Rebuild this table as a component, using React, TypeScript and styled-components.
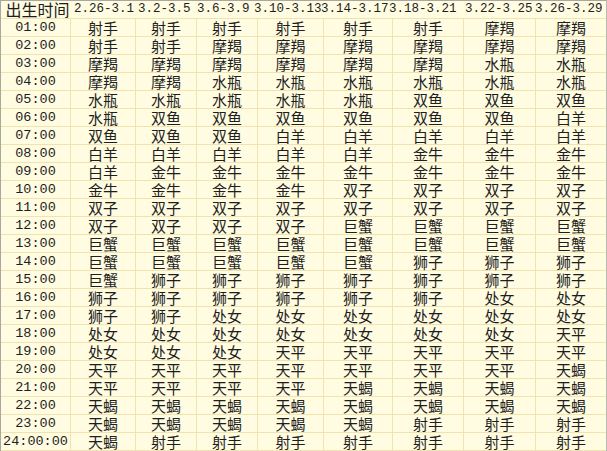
import { createGlobalStyle, styled } from "styled-components";

const GlobalStyle = createGlobalStyle`
    html, body {
        margin: 0;
        padding: 0;
        background: #ffffff;
    }
`;

// body columns follow the centred signs, header texts start a bit off those lines
const BODY_COLUMNS = [70, 65, 61, 61, 66, 69, 71, 72, 70];
const HEAD_COLUMNS = [73, 64, 59, 57, 67, 68, 76, 70, 71];

const toTemplate = (cols: number[]) => cols.map((w) => `${w}px`).join(" ");

const Sheet = styled.div`
    display: flex;
    flex-direction: column;
    width: 605px;
    border-top: 1px solid #a8a8a0;
    border-left: 1px solid #a8a8a0;
    border-right: 1px solid #b8b8b0;
    background: #fffce1;
    color: #1e1e1e;
`;

const HeadRow = styled.div`
    display: grid;
    grid-template-columns: ${toTemplate(HEAD_COLUMNS)};
    box-sizing: border-box;
    height: 18px;
    border-bottom: 1px solid #f0e3ae;
`;

const Body = styled.div`
    display: grid;
    grid-template-columns: ${toTemplate(BODY_COLUMNS)};
    grid-auto-rows: 18px;
`;

const HeadTitle = styled.div`
    display: flex;
    align-items: center;
    justify-content: center;
    font-family: "Noto Sans CJK SC", sans-serif;
    font-size: 16px;
    line-height: 17px;
    white-space: nowrap;
`;

const HeadRange = styled.div`
    display: flex;
    align-items: center;
    font-family: "Liberation Mono", "DejaVu Sans Mono", monospace;
    font-size: 12.5px;
    line-height: 17px;
    white-space: nowrap;
`;

const Cell = styled.div<{ $time?: boolean }>`
    display: flex;
    align-items: center;
    justify-content: center;
    box-sizing: border-box;
    border-right: 1px solid #f0e3ae;
    border-bottom: 1px solid #f0e3ae;
    white-space: nowrap;
    font-family: ${(p) =>
        p.$time
            ? `"Liberation Mono", "DejaVu Sans Mono", monospace`
            : `"Noto Sans CJK SC", sans-serif`};
    font-size: ${(p) => (p.$time ? "13.5px" : "15px")};
    line-height: 17px;
    &:nth-child(9n) {
        border-right: none;
    }
`;

const ranges = ["2.26-3.1", "3.2-3.5", "3.6-3.9", "3.10-3.13", "3.14-3.17", "3.18-3.21", "3.22-3.25", "3.26-3.29"];

const rows: [string, string][] = [
    ["01:00", "射手 射手 射手 射手 射手 射手 摩羯 摩羯"],
    ["02:00", "射手 射手 摩羯 摩羯 摩羯 摩羯 摩羯 摩羯"],
    ["03:00", "摩羯 摩羯 摩羯 摩羯 摩羯 摩羯 水瓶 水瓶"],
    ["04:00", "摩羯 摩羯 水瓶 水瓶 水瓶 水瓶 水瓶 水瓶"],
    ["05:00", "水瓶 水瓶 水瓶 水瓶 水瓶 双鱼 双鱼 双鱼"],
    ["06:00", "水瓶 双鱼 双鱼 双鱼 双鱼 双鱼 双鱼 白羊"],
    ["07:00", "双鱼 双鱼 双鱼 白羊 白羊 白羊 白羊 白羊"],
    ["08:00", "白羊 白羊 白羊 白羊 白羊 金牛 金牛 金牛"],
    ["09:00", "白羊 金牛 金牛 金牛 金牛 金牛 金牛 金牛"],
    ["10:00", "金牛 金牛 金牛 金牛 双子 双子 双子 双子"],
    ["11:00", "双子 双子 双子 双子 双子 双子 双子 双子"],
    ["12:00", "双子 双子 双子 双子 巨蟹 巨蟹 巨蟹 巨蟹"],
    ["13:00", "巨蟹 巨蟹 巨蟹 巨蟹 巨蟹 巨蟹 巨蟹 巨蟹"],
    ["14:00", "巨蟹 巨蟹 巨蟹 巨蟹 巨蟹 狮子 狮子 狮子"],
    ["15:00", "巨蟹 狮子 狮子 狮子 狮子 狮子 狮子 狮子"],
    ["16:00", "狮子 狮子 狮子 狮子 狮子 狮子 处女 处女"],
    ["17:00", "狮子 狮子 处女 处女 处女 处女 处女 处女"],
    ["18:00", "处女 处女 处女 处女 处女 处女 处女 天平"],
    ["19:00", "处女 处女 处女 天平 天平 天平 天平 天平"],
    ["20:00", "天平 天平 天平 天平 天平 天平 天平 天蝎"],
    ["21:00", "天平 天平 天平 天平 天蝎 天蝎 天蝎 天蝎"],
    ["22:00", "天蝎 天蝎 天蝎 天蝎 天蝎 天蝎 天蝎 天蝎"],
    ["23:00", "天蝎 天蝎 天蝎 天蝎 天蝎 射手 射手 射手"],
    ["24:00:00", "天蝎 射手 射手 射手 射手 射手 射手 射手"],
];

export default function App() {
    return (
        <>
            <GlobalStyle />
            <Sheet>
                <HeadRow>
                    <HeadTitle>出生时间</HeadTitle>
                    {ranges.map((r) => (
                        <HeadRange key={r}>{r}</HeadRange>
                    ))}
                </HeadRow>
                <Body>
                    {rows.map(([time, signs]) => [
                        <Cell $time key={time}>{time}</Cell>,
                        ...signs.split(" ").map((s, i) => <Cell key={time + i}>{s}</Cell>),
                    ])}
                </Body>
            </Sheet>
        </>
    );
}
